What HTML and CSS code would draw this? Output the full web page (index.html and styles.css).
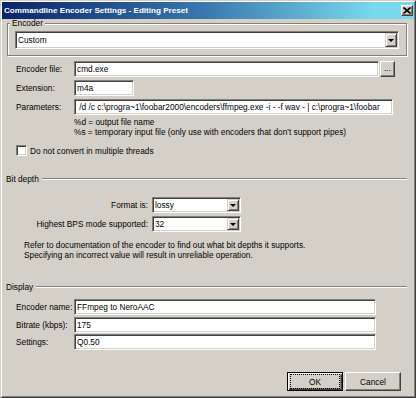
FILE: index.html
```html
<html>
<head>
    <title>Commandline Encoder Settings - Editing Preset</title>
    <meta http-equiv="Content-Type" content="text/html;charset=UTF-8"/>
    <link rel="stylesheet" href="styles.css">
</head>
<body>
<div class="window">
    <div class="titlebar">
        <span class="title">Commandline Encoder Settings - Editing Preset</span>
        <span class="close">
            <svg width="8" height="7" viewBox="0 0 8 7"><path d="M0.5 0.5 L7.5 6.5 M7.5 0.5 L0.5 6.5" stroke="#000" stroke-width="1.6"/></svg>
        </span>
    </div>
    <div class="client">
        <fieldset class="group">
            <legend>Encoder</legend>
            <div class="combo combo-encoder">
                <span class="combo-value">Custom</span>
                <span class="drop"><i class="arrow"></i></span>
            </div>
        </fieldset>

        <div class="row row-first">
            <label>Encoder file:</label>
            <div class="edit edit-file">cmd.exe</div>
            <span class="btn btn-browse">...</span>
        </div>
        <div class="row">
            <label>Extension:</label>
            <div class="edit edit-ext">m4a</div>
        </div>
        <div class="row">
            <label>Parameters:</label>
            <div class="edit edit-params"> /d /c c:\progra~1\foobar2000\encoders\ffmpeg.exe -i - -f wav - | c:\progra~1\foobar</div>
        </div>
        <div class="hint">
            %d = output file name<br>
            %s = temporary input file (only use with encoders that don't support pipes)
        </div>
        <div class="check-row">
            <span class="checkbox"></span>
            <span class="check-label">Do not convert in multiple threads</span>
        </div>

        <div class="separator sep-bits">
            <span class="sep-label">Bit depth</span>
            <span class="sep-line"></span>
        </div>
        <div class="opt-row opt-first">
            <label>Format is:</label>
            <div class="combo combo-small">
                <span class="combo-value">lossy</span>
                <span class="drop"><i class="arrow"></i></span>
            </div>
        </div>
        <div class="opt-row">
            <label>Highest BPS mode supported:</label>
            <div class="combo combo-small">
                <span class="combo-value">32</span>
                <span class="drop"><i class="arrow"></i></span>
            </div>
        </div>
        <div class="note">
            Refer to documentation of the encoder to find out what bit depths it supports.<br>
            Specifying an incorrect value will result in unreliable operation.
        </div>

        <div class="separator sep-display">
            <span class="sep-label">Display</span>
            <span class="sep-line"></span>
        </div>
        <div class="row row-display">
            <label>Encoder name:</label>
            <div class="edit edit-display">FFmpeg to NeroAAC</div>
        </div>
        <div class="row row-bitrate">
            <label>Bitrate (kbps):</label>
            <div class="edit edit-display">175</div>
        </div>
        <div class="row row-settings">
            <label>Settings:</label>
            <div class="edit edit-display">Q0.50</div>
        </div>

        <div class="buttons">
            <span class="btn btn-default"><span class="focus">OK</span></span>
            <span class="btn btn-push">Cancel</span>
        </div>
    </div>
</div>
</body>
</html>
```

FILE: styles.css
```css
* {
    box-sizing: border-box;
}

body {
    margin: 0;
    background: #d4d0c8;
    font-family: "Liberation Sans", Arial, sans-serif;
    font-size: 8.3px;
    color: #000;
}

.window {
    width: 416px;
    height: 398px;
    padding: 1px;
    background: #d4d0c8;
    border: 1px solid;
    border-color: #d4d0c8 #404040 #404040 #d4d0c8;
    box-shadow: inset 1px 1px #fff, inset -1px -1px #808080;
}

.titlebar {
    display: flex;
    align-items: center;
    height: 17px;
    padding-left: 2px;
    background: linear-gradient(to right, #0a246a, #3a7ab0 50%, #78d8ec 90%);
}

.title {
    flex: 1;
    color: #fff;
    font-weight: bold;
    font-size: 8.1px;
    white-space: nowrap;
}

.close {
    display: flex;
    align-items: center;
    justify-content: center;
    width: 12px;
    height: 11px;
    margin-right: 1px;
    background: #d4d0c8;
    border: 1px solid;
    border-color: #fff #404040 #404040 #fff;
    box-shadow: inset -1px -1px #808080;
}

.client {
    padding: 0 7px 0 5px;
}

/* group box */
.group {
    margin: 0;
    padding: 4px 7px 6px 7px;
    border: 1px solid #808080;
    box-shadow: inset 1px 1px #fff, 1px 1px #fff;
}

.group legend {
    margin-left: -5px;
    padding: 0 2px;
    line-height: 8px;
    background: #d4d0c8;
}

/* sunken controls */
.combo,
.edit,
.checkbox {
    background: #fff;
    border: 1px solid;
    border-color: #808080 #fff #fff #808080;
    box-shadow: inset 1px 1px #404040, inset -1px -1px #d4d0c8;
}

.combo {
    display: flex;
    align-items: stretch;
    padding: 1px;
}

.combo-value {
    flex: 1;
    display: flex;
    align-items: center;
    padding-left: 1px;
}

.combo-encoder {
    height: 18px;
}

.combo-small {
    width: 89px;
    height: 16px;
}

.drop {
    display: flex;
    align-items: center;
    justify-content: center;
    width: 12px;
    background: #d4d0c8;
    border: 1px solid;
    border-color: #d4d0c8 #404040 #404040 #d4d0c8;
    box-shadow: inset 1px 1px #fff, inset -1px -1px #808080;
}

.arrow {
    width: 0;
    height: 0;
    border-left: 3px solid transparent;
    border-right: 3px solid transparent;
    border-top: 3px solid #000;
}

.edit {
    height: 16px;
    line-height: 14px;
    padding: 0 2px;
    white-space: pre;
    overflow: hidden;
}

/* label + edit rows */
.row {
    display: flex;
    align-items: center;
    height: 16px;
    margin-top: 3px;
    padding-left: 9px;
}

.row label {
    width: 58px;
    flex: none;
}

.row-first {
    margin-top: 5px;
}

.edit-file {
    width: 305px;
}

.edit-ext {
    width: 60px;
}

.edit-params {
    width: 319px;
}

.edit-display {
    width: 302px;
}

.row-display {
    margin-top: 7px;
}

.row-bitrate {
    margin-top: 2px;
}

.row-settings {
    margin-top: 1px;
}

.btn {
    display: flex;
    align-items: center;
    justify-content: center;
    background: #d4d0c8;
    border: 1px solid;
    border-color: #fff #404040 #404040 #fff;
    box-shadow: inset -1px -1px #808080;
}

.btn-browse {
    width: 15px;
    height: 16px;
    margin-left: 1px;
    line-height: 10px;
    padding-bottom: 3px;
}

.hint {
    margin: 2px 0 0 67px;
    line-height: 10px;
}

.check-row {
    display: flex;
    align-items: center;
    height: 11px;
    margin-top: 8px;
    padding-left: 9px;
}

.checkbox {
    width: 11px;
    height: 11px;
}

.check-label {
    margin-left: 3px;
}

/* etched separators */
.separator {
    display: flex;
    align-items: center;
    height: 10px;
    margin-left: -1px;
}

.sep-bits {
    margin-top: 18px;
}

.sep-display {
    margin-top: 22px;
}

.sep-line {
    flex: 1;
    height: 2px;
    margin-left: 3px;
    border-top: 1px solid #808080;
    border-bottom: 1px solid #fff;
}

.opt-row {
    display: flex;
    align-items: center;
    height: 16px;
    margin-top: 3px;
}

.opt-row label {
    width: 141px;
    margin-right: 4px;
    text-align: right;
}

.opt-first {
    margin-top: 13px;
}

.note {
    margin: 8px 0 0 17px;
    line-height: 10px;
}

.buttons {
    display: flex;
    justify-content: flex-end;
    gap: 2px;
    margin-top: 22px;
    padding-right: 6px;
}

.btn-push,
.btn-default {
    width: 56px;
    height: 19px;
}

.btn-default {
    border: 1px solid #000;
    box-shadow: inset 1px 1px #fff, inset -1px -1px #404040, inset -2px -2px #808080;
}

.btn-default .focus {
    display: flex;
    align-items: center;
    justify-content: center;
    width: 48px;
    height: 13px;
    outline: 1px dotted #000;
}
```
